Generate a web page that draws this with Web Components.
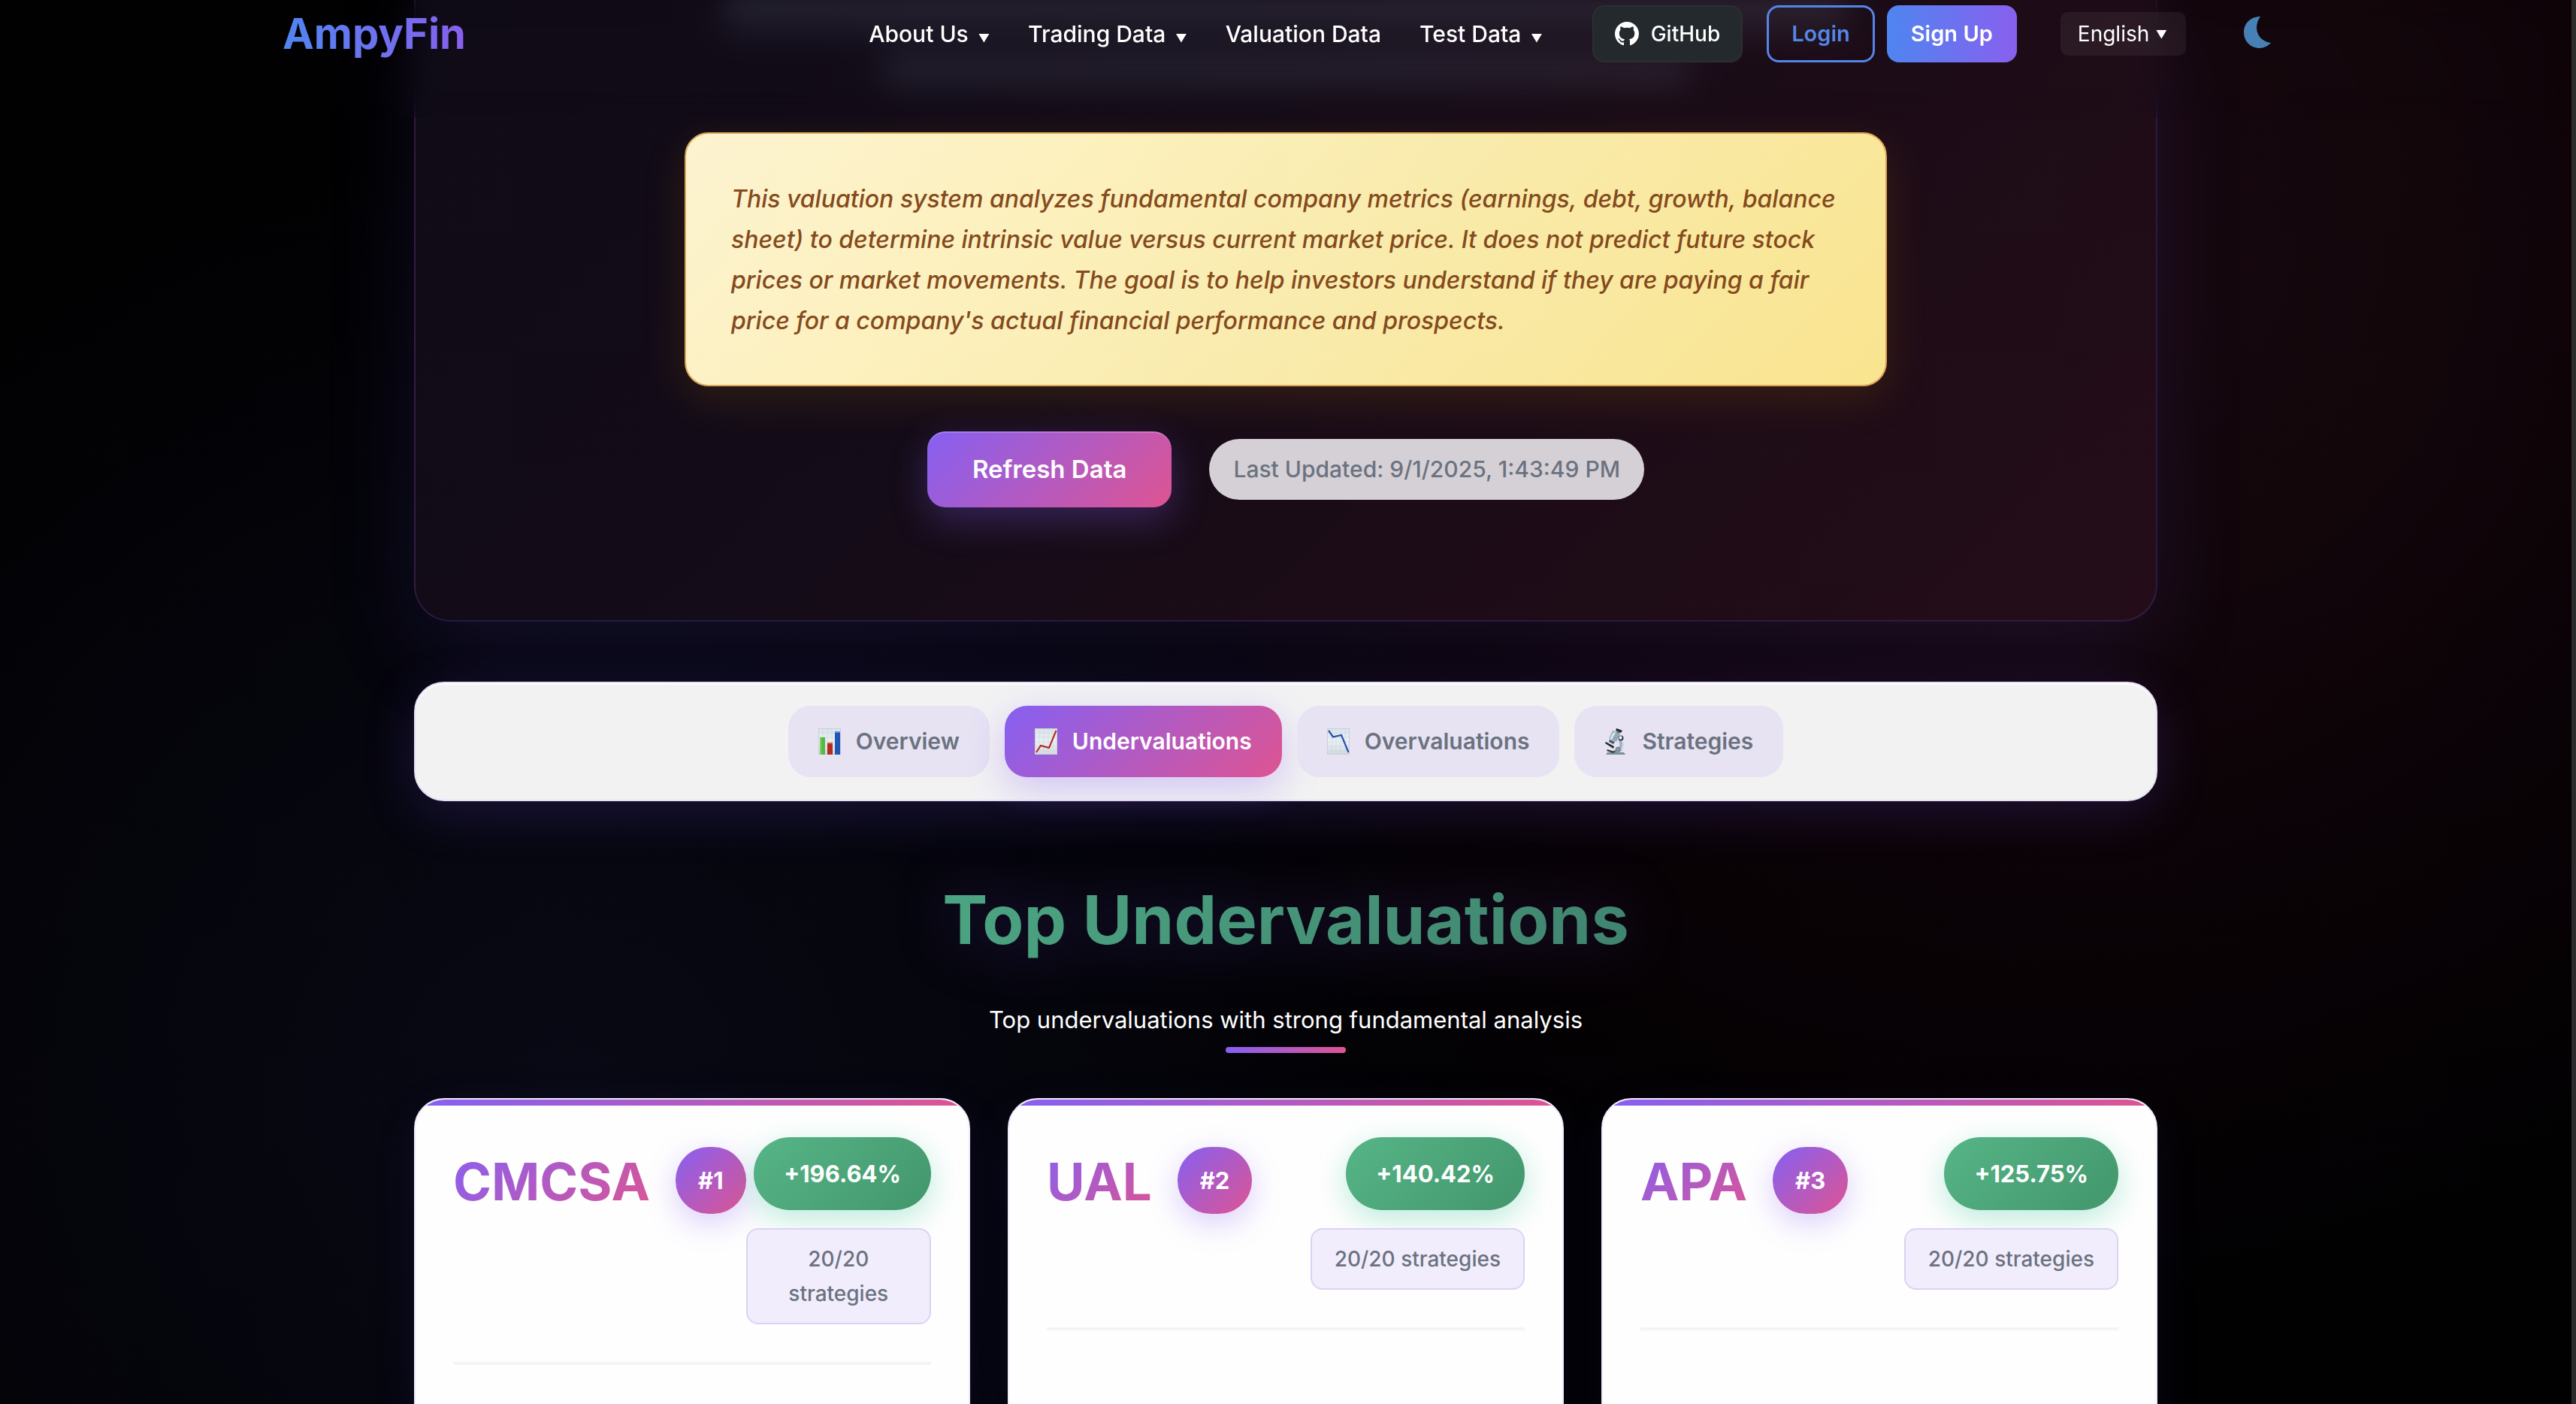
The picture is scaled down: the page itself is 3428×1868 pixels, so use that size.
<!DOCTYPE html>
<html lang="en">
<head>
<meta charset="utf-8">
<title>AmpyFin – Valuation Data</title>
<style>
  html, body { margin: 0; height: 100%; overflow: hidden; background: #000; }
  body { font-family: Inter, "Liberation Sans", sans-serif; color: #fff; }
</style>
</head>
<body>
<ampy-app>
  <ampy-header slot="header"></ampy-header>
  <ampy-hero>
    <span slot="note">This valuation system analyzes fundamental company metrics (earnings, debt, growth, balance sheet) to determine intrinsic value versus current market price. It does not predict future stock prices or market movements. The goal is to help investors understand if they are paying a fair price for a company's actual financial performance and prospects.</span>
    <span slot="action">Refresh Data</span>
    <span slot="updated">Last Updated: 9/1/2025, 1:43:49 PM</span>
  </ampy-hero>
  <ampy-tabs>
    <ampy-tab icon="bars">Overview</ampy-tab>
    <ampy-tab icon="up" active>Undervaluations</ampy-tab>
    <ampy-tab icon="down">Overvaluations</ampy-tab>
    <ampy-tab icon="scope">Strategies</ampy-tab>
  </ampy-tabs>
  <ampy-section-title>
    <span slot="title">Top Undervaluations</span>
    <span slot="subtitle">Top undervaluations with strong fundamental analysis</span>
  </ampy-section-title>
  <ampy-card-grid>
    <ampy-stock-card><span slot="ticker">CMCSA</span><span slot="rank">#1</span><span slot="change">+196.64%</span><span slot="count">20/20 strategies</span></ampy-stock-card>
    <ampy-stock-card><span slot="ticker">UAL</span><span slot="rank">#2</span><span slot="change">+140.42%</span><span slot="count">20/20 strategies</span></ampy-stock-card>
    <ampy-stock-card><span slot="ticker">APA</span><span slot="rank">#3</span><span slot="change">+125.75%</span><span slot="count">20/20 strategies</span></ampy-stock-card>
  </ampy-card-grid>
</ampy-app>

<script>
const define = (name, html, setup) => {
  const template = document.createElement('template');
  template.innerHTML = html;
  customElements.define(name, class extends HTMLElement {
    constructor() {
      super();
      this.attachShadow({ mode: 'open' }).append(template.content.cloneNode(true));
    }
    connectedCallback() { if (setup) setup(this, this.shadowRoot); }
  });
};

const sheet = (id, art) => `
  <svg viewBox="0 0 30 35" width="30" height="35" aria-hidden="true">
    <defs><linearGradient id="${id}" x1="0" y1="0" x2="0" y2="1">
      <stop offset="0" stop-color="#dbe4ea"/><stop offset=".5" stop-color="#eaf0f3"/><stop offset="1" stop-color="#d3d9de"/>
    </linearGradient></defs>
    <rect width="30" height="35" fill="url(#${id})"/>
    <path d="M0 6H30M0 12H30M0 18H30M0 24H30M0 30H30M6 0V35M12 0V35M18 0V35M24 0V35" stroke="#c3d0d9" stroke-width=".5" fill="none"/>
    <rect x=".5" y=".5" width="29" height="34" fill="none" stroke="#c5cdd2" stroke-width=".8"/>
    ${art}
  </svg>`;

const icons = {
  bars: sheet('a', `
    <rect x="2" y="12" width="7" height="23" fill="#58b947"/><rect x="2" y="12" width="2" height="23" fill="#7ad067"/>
    <rect x="12" y="19" width="7" height="16" fill="#b22a20"/><rect x="12" y="19" width="7" height="2" fill="#d1564a"/>
    <rect x="22" y="5" width="7" height="30" fill="#2456b8"/><rect x="22" y="4" width="7" height="2" fill="#5f93e0"/>`),
  up: sheet('b', `<path d="M2 32 L8 23 L19 26 L28.500 3" fill="none" stroke="#b5261e" stroke-width="2"/>`),
  down: sheet('c', `<path d="M2 3 L8 11.500 L19 9 L28.500 32" fill="none" stroke="#2a4fb4" stroke-width="2.200"/>`),
  scope: `
  <svg viewBox="0 0 30 35" width="30" height="35" aria-hidden="true">
    <path d="M2 35 L4 32 H26 L28 35Z" fill="#7c8fa0"/>
    <path d="M9 32 Q17 26 20 32Z" fill="#53636f"/>
    <path d="M20 12 Q29 19 24 28 L21 32 H15 L16 27 Q23 24 19 17Z" fill="#9fb2c1"/>
    <path d="M23 15 Q27 21 23 28" stroke="#dbe6ee" stroke-width="1.500" fill="none"/>
    <circle cx="18" cy="28" r="3" fill="#8798a6" stroke="#6b7c89"/>
    <path d="M2 18 L13 24 L12 27 L1 20Z" fill="#252a2e"/>
    <path d="M4 28 L13 31 L12 33 L3 30Z" fill="#30363b"/>
    <path d="M11 3 L21 7 L16 18 L6 14Z" fill="#8fa9bb"/>
    <path d="M12 5 L15 6 L10 15 L7 14Z" fill="#d6e4ec"/>
    <path d="M7 15 L14 18 L12 21 L6 18Z" fill="#4b5b67"/>
    <path d="M16 0 L24 3 L22 6 L15 3Z" fill="#22272b"/>
    <path d="M17 3 L21 5 L20 7 L16 5Z" fill="#5b6b77"/>
    <circle cx="22" cy="13" r="3.500" fill="#2d3338"/><circle cx="21.500" cy="12.500" r="2.200" fill="#eef3f6"/>
  </svg>`
};

define('ampy-app', `
  <style>
    :host {
      box-sizing: border-box; display: block; height: 100vh; overflow: hidden; border-right: 6px solid #2c2c2c;
      background:
        radial-gradient(circle at 80% 16%, #17080f 0, #12060b 16%, rgba(14,3,8,.7) 28%, transparent 46%),
        radial-gradient(circle at 22% 78%, #090915 0, rgba(6,6,15,.8) 20%, transparent 42%),
        #010102;
    }
    main { display: flex; flex-direction: column; width: calc(100% - 96px); max-width: 2320px; margin: -157px auto 0; }
  </style>
  <slot name="header"></slot>
  <main><slot></slot></main>`);

define('ampy-nav-link', `
  <style>
    :host { display: block; }
    a { display: flex; align-items: baseline; gap: 13px; color: #fff; text-decoration: none; font-size: 30px; font-weight: 500; line-height: 48px; white-space: nowrap; }
    .arrow { display: none; font-size: 15px; line-height: 15px; }
    :host([menu]) .arrow { display: inline; }
  </style>
  <a href="#"><slot></slot></a>`, (host, root) => {
    if (host.hasAttribute('menu') && !root.querySelector('.arrow')) {
      const arrow = document.createElement('span');
      arrow.className = 'arrow';
      arrow.textContent = '▼';
      root.querySelector('a').append(arrow);
    }
  });

define('ampy-header', `
  <style>
    :host { display: block; position: sticky; top: 0; z-index: 10; height: 157px; backdrop-filter: blur(20px); }
    .bar { display: flex; align-items: center; width: calc(100% - 96px); max-width: 2670px; margin: 0 auto; padding-top: 7px; height: 76px; }
    .logo { font-size: 56px; line-height: 76px; font-weight: 700; text-decoration: none; color: transparent; background: linear-gradient(90deg, #4f85f0, #8860ee); background-clip: text; -webkit-background-clip: text; }
    nav { display: flex; gap: 51px; margin-left: auto; }
    .btn { box-sizing: border-box; display: flex; align-items: center; gap: 16px; height: 76px; border-radius: 16px; font: 600 29px/44px Inter, sans-serif; color: #fff; text-decoration: none; white-space: nowrap; border: 0; padding: 0 32px; }
    .github { margin-left: 66px; padding: 0 28px; border: 2px solid #2c2e32; background: #24292e; font-size: 28px; font-weight: 500; }
    .auth { display: flex; gap: 16px; margin-left: 32px; }
    .login { color: #5585e6; background: none; border: 3px solid #5585e6; padding: 0 30px; }
    .signup { background: linear-gradient(90deg, #4f85f0, #8860ee); }
    .lang { display: flex; align-items: center; gap: 8px; height: 58px; padding: 0 25px 0 23px; margin-left: 58px; border-radius: 10px; background: rgba(255,255,255,.06); font-size: 28px; }
    .lang span { font-size: 15px; }
    select { appearance: none; -webkit-appearance: none; border: 0; margin: 0; padding: 0; background: none; color: #fff; font: 400 28px/44px Inter, sans-serif; }
    .theme { display: flex; border: 0; background: none; margin-left: 53px; padding: 0 24px 5px; }
    svg { display: block; }
  </style>
  <header class="bar">
    <a class="logo" href="#">AmpyFin</a>
    <nav aria-label="Main">
      <ampy-nav-link menu>About Us</ampy-nav-link>
      <ampy-nav-link menu>Trading Data</ampy-nav-link>
      <ampy-nav-link>Valuation Data</ampy-nav-link>
      <ampy-nav-link menu>Test Data</ampy-nav-link>
    </nav>
    <a class="btn github" href="#">
      <svg width="32" height="32" viewBox="0 0 16 16" fill="#fff" aria-hidden="true"><path d="M8 0C3.580 0 0 3.580 0 8c0 3.540 2.290 6.530 5.470 7.590.4.070.55-.17.55-.38 0-.19-.01-.82-.01-1.490-2.010.37-2.530-.49-2.690-.94-.09-.23-.48-.94-.82-1.130-.28-.15-.68-.52-.01-.53.63-.01 1.080.58 1.230.82.72 1.210 1.870.87 2.330.66.07-.52.28-.87.51-1.070-1.780-.2-3.640-.89-3.640-3.950 0-.87.31-1.590.82-2.150-.08-.2-.36-1.020.08-2.120 0 0 .67-.21 2.200.82.64-.18 1.320-.27 2-.27s1.360.09 2 .27c1.530-1.040 2.200-.82 2.200-.82.44 1.100.16 1.920.08 2.120.51.56.82 1.270.82 2.150 0 3.070-1.870 3.750-3.650 3.950.29.25.54.73.54 1.480 0 1.070-.01 1.930-.01 2.200 0 .21.15.46.55.38A8.010 8.010 0 0 0 16 8c0-4.420-3.580-8-8-8z"/></svg>
      GitHub
    </a>
    <div class="auth">
      <button class="btn login" type="button">Login</button>
      <button class="btn signup" type="button">Sign Up</button>
    </div>
    <label class="lang"><select aria-label="Language"><option>English</option></select><span>▼</span></label>
    <button class="theme" type="button" aria-label="Toggle theme">
      <svg width="36" height="42" viewBox="0 0 36 42" fill="#4680b5"><path d="M22 0C9 0 0 9 0 21C0 33 9 42 21 42C27 42 32 39 36 35C25 34 17 25 17 15C17 9 19 4 22 0Z"/></svg>
    </button>
  </header>`);

define('ampy-hero', `
  <style>
    :host { box-sizing: border-box; display: flex; flex-direction: column; align-items: center; padding: 0 48px 150px; border: 2px solid rgba(120,80,220,.22); border-top: 0; border-radius: 0 0 48px 48px;
      background: linear-gradient(135deg, #0f0b17 0%, #140c18 40%, #1c0c17 66%, #240d18 100%);
      box-shadow: 0 40px 120px rgba(95,75,195,.15); }
    .lede { display: flex; flex-direction: column; align-items: center; gap: 32px; width: 100%; height: 176px; }
    .lede i { height: 40px; border-radius: 20px; background: rgba(150,160,190,.16); filter: blur(12px); width: min(1500px, 90%); }
    .lede i + i { width: min(1080px, 80%); }
    .note { box-sizing: border-box; max-width: 1600px; margin: 0; padding: 60px 60px 58px; border: 2px solid #d8a655; border-radius: 32px; background: linear-gradient(135deg, #fcf3d0 0%, #fdf1c0 25%, #f9ebac 55%, #f9e48f 100%); color: #854a1d; font: italic 500 32px/54px Inter, sans-serif; box-shadow: 0 16px 60px rgba(245,158,11,.13); }
    .row { display: flex; align-items: center; gap: 50px; margin-top: 60px; }
    button { border: 0; border-radius: 24px; padding: 26px 60px; color: #fff; font: 600 33px/49px Inter, sans-serif; background: linear-gradient(135deg, #8660f2, #de5492); box-shadow: 0 16px 50px rgba(139,92,246,.3), inset 0 2px 0 rgba(255,255,255,.2); }
    .pill { padding: 16px 32px; border-radius: 41px; background: #d5d0d5; color: #6b7280; font-size: 30px; font-weight: 500; line-height: 49px; }
  </style>
  <div class="lede" aria-hidden="true"><i></i><i></i></div>
  <p class="note"><slot name="note"></slot></p>
  <div class="row"><button type="button"><slot name="action"></slot></button><div class="pill"><slot name="updated"></slot></div></div>`);

define('ampy-tab', `
  <style>
    :host { display: block; }
    button { display: flex; align-items: center; gap: 20px; border: 0; border-radius: 30px; padding: 23px 40px; background: #e7e3f3; color: #6b7280; font: 600 30px/49px Inter, sans-serif; white-space: nowrap; }
    :host([active]) button { color: #fff; background: linear-gradient(135deg, #8660f2, #de5492); box-shadow: 0 16px 50px rgba(139,92,246,.3); }
    svg { display: block; }
  </style>
  <button type="button"><slot></slot></button>`, (host, root) => {
    const button = root.querySelector('button');
    if (!root.querySelector('svg')) button.insertAdjacentHTML('afterbegin', icons[host.getAttribute('icon')]);
  });

define('ampy-tabs', `
  <style>
    :host { box-sizing: border-box; display: flex; justify-content: center; flex-wrap: wrap; gap: 20px; margin-top: 80px; padding: 30px; border: 2px solid #e6e0f3; border-radius: 40px; background: #f2f2f3; box-shadow: 0 16px 70px rgba(110,80,230,.2), inset 0 2px 0 #fff; }
  </style>
  <slot></slot>`);

define('ampy-section-title', `
  <style>
    :host { display: flex; flex-direction: column; align-items: center; margin-top: 104px; }
    h2 { margin: 0; font-size: 90px; line-height: 108px; font-weight: 700; color: transparent; background: linear-gradient(135deg, #4ca682, #40836f); background-clip: text; -webkit-background-clip: text; filter: drop-shadow(0 0 40px rgba(120,80,230,.3)); }
    p { margin: 54px 0 0; font-size: 31px; line-height: 50px; }
    .rule { width: 160px; height: 8px; margin: 11px 0 60px; border-radius: 4px; background: linear-gradient(90deg, #8660f2, #de5492); }
  </style>
  <h2><slot name="title"></slot></h2>
  <p><slot name="subtitle"></slot></p>
  <div class="rule"></div>`);

define('ampy-card-grid', `
  <style>:host { display: grid; grid-template-columns: repeat(3, minmax(0, 1fr)); gap: 50px; }</style>
  <slot></slot>`);

define('ampy-stock-card', `
  <style>
    :host { box-sizing: border-box; display: block; min-height: 800px; overflow: hidden; border: 2px solid #f0eafb; border-radius: 40px; background: #fefefe; box-shadow: 0 16px 60px rgba(80,70,200,.1); }
    .strip { height: 8px; margin-bottom: 42px; background: linear-gradient(90deg, #8660f2, #de5492); }
    header { display: flex; justify-content: space-between; align-items: flex-start; margin: 0 50px; padding-bottom: 50px; border-bottom: 4px solid #f3f4f5; }
    .name { display: flex; align-items: center; gap: 34px; flex: none; }
    h3 { margin: 0; padding-top: 4px; font-size: 69px; line-height: 110px; font-weight: 700; color: transparent; background: linear-gradient(135deg, #8660f2, #de5492); background-clip: text; -webkit-background-clip: text; }
    .rank { padding: 20px 30px; border-radius: 44px; font-size: 31px; line-height: 49px; font-weight: 700; background: linear-gradient(135deg, #8660f2, #de5492); box-shadow: 0 12px 40px rgba(139,92,246,.3); }
    .stats { display: flex; flex-direction: column; align-items: flex-end; gap: 24px; min-width: 0; }
    .change { padding: 24px 40px; border-radius: 48px; font-size: 31px; line-height: 49px; font-weight: 700; white-space: nowrap; background: linear-gradient(135deg, #56b587, #42966b); box-shadow: 0 12px 40px rgba(16,185,129,.28); }
    .count { padding: 16px 30px; border: 2px solid #dbd3f1; border-radius: 16px; background: #f1edfc; color: #6b7280; font-size: 28px; line-height: 46px; font-weight: 500; text-align: center; }
  </style>
  <div class="strip"></div>
  <header>
    <div class="name"><h3><slot name="ticker"></slot></h3><div class="rank"><slot name="rank"></slot></div></div>
    <div class="stats"><div class="change"><slot name="change"></slot></div><div class="count"><slot name="count"></slot></div></div>
  </header>`);
</script>
</body>
</html>
